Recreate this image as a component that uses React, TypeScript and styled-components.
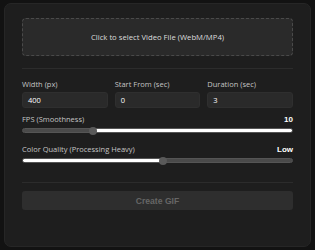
import React from 'react';
import styled, { createGlobalStyle } from 'styled-components';

const GlobalStyle = createGlobalStyle`
  html, body {
    margin: 0;
    padding: 0;
    background: #121212;
  }
  * { box-sizing: border-box; }
`;

const Page = styled.div`
  padding: 3px 4px;
  width: 315px;
  height: 250px;
`;

const Card = styled.div`
  height: 244px;
  background: #1e1e1e;
  border: 1px solid #262626;
  border-radius: 7px;
  padding: 14px 17px;
  display: flex;
  flex-direction: column;
  font-family: 'Open Sans', 'Liberation Sans', sans-serif;
`;

const DropZone = styled.div`
  height: 38px;
  border: 1px dashed #4a4a4a;
  border-radius: 4px;
  background: #2a2a2a;
  color: #dcdcdc;
  font-size: 7.7px;
  display: flex;
  align-items: center;
  justify-content: center;
`;

const Divider = styled.hr<{ $top: number; $bottom: number }>`
  border: none;
  border-top: 1px solid #2c2c2c;
  margin: ${(p) => `${p.$top}px 0 ${p.$bottom}px`};
`;

const FieldRow = styled.div`
  display: grid;
  grid-template-columns: repeat(3, 1fr);
  gap: 7px;
`;

const Field = styled.div`
  display: flex;
  flex-direction: column;
  gap: 3px;
`;

const Label = styled.label`
  color: #c4c4c4;
  font-size: 7.5px;
  line-height: 10px;
`;

const Input = styled.div`
  height: 16px;
  background: #2a2a2a;
  border: 1px solid #2f2f2f;
  border-radius: 3px;
  color: #ffffff;
  font-size: 7.5px;
  padding: 0 5px;
  display: flex;
  align-items: center;
`;

const SliderBlock = styled.div<{ $top: number }>`
  display: flex;
  flex-direction: column;
  gap: 4px;
  margin-top: ${(p) => p.$top}px;
`;

const SliderHead = styled.div`
  display: flex;
  justify-content: space-between;
  align-items: center;
`;

const Value = styled.span`
  color: #ffffff;
  font-family: 'Liberation Sans', Arial, sans-serif;
  font-weight: bold;
  font-size: 8px;
`;

const Track = styled.div<{ $pos: number; $fillLeft: boolean }>`
  position: relative;
  height: 5px;
  border-radius: 3px;
  border: 1px solid #555;
  background: ${(p) =>
    p.$fillLeft
      ? `linear-gradient(to right, #fff ${p.$pos}%, #4a4a4a ${p.$pos}%)`
      : `linear-gradient(to right, #4a4a4a ${p.$pos}%, #fff ${p.$pos}%)`};
`;

const Thumb = styled.div`
  position: absolute;
  top: 50%;
  width: 8px;
  height: 8px;
  margin: -4px 0 0 -4px;
  border-radius: 50%;
  background: #5a5a5a;
`;

const Button = styled.button`
  height: 19px;
  width: 100%;
  border: none;
  border-radius: 3px;
  background: #2e2e2e;
  color: #666;
  font-family: 'Liberation Sans', Arial, sans-serif;
  font-weight: bold;
  font-size: 8.6px;
`;

const fields = [
  { label: 'Width (px)', value: '400' },
  { label: 'Start From (sec)', value: '0' },
  { label: 'Duration (sec)', value: '3' },
];

const Slider = ({ label, value, pos, fillLeft, top }: { label: string; value: string; pos: number; fillLeft: boolean; top: number }) => (
  <SliderBlock $top={top}>
    <SliderHead>
      <Label>{label}</Label>
      <Value>{value}</Value>
    </SliderHead>
    <Track $pos={pos} $fillLeft={fillLeft}>
      <Thumb style={{ left: `${pos}%` }} />
    </Track>
  </SliderBlock>
);

const App = () => (
  <Page>
    <GlobalStyle />
    <Card>
      <DropZone>Click to select Video File (WebM/MP4)</DropZone>
      <Divider $top={12} $bottom={10} />
      <FieldRow>
        {fields.map((f) => (
          <Field key={f.label}>
            <Label>{f.label}</Label>
            <Input>{f.value}</Input>
          </Field>
        ))}
      </FieldRow>
      <Slider label="FPS (Smoothness)" value="10" pos={26} fillLeft={false} top={6} />
      <Slider label="Color Quality (Processing Heavy)" value="Low" pos={52} fillLeft={true} top={11} />
      <Divider $top={19} $bottom={8} />
      <Button>Create GIF</Button>
    </Card>
  </Page>
);

export default App;
